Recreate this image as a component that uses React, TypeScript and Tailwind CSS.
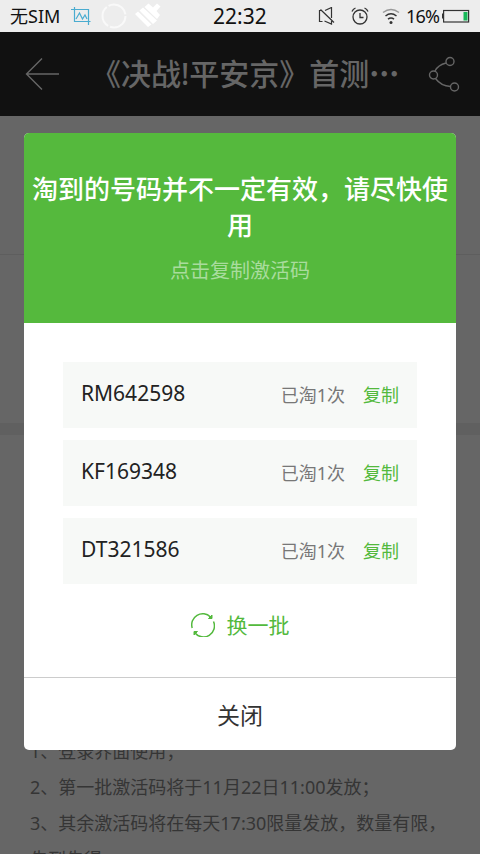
import { useState } from "react";

interface Code {
  code: string;
  count: number;
}

const codes: Code[] = [
  { code: "RM642598", count: 1 },
  { code: "KF169348", count: 1 },
  { code: "DT321586", count: 1 },
];

const StatusBar = () => {
  return (
    <div className="flex h-8 shrink-0 items-center bg-[#ededed] text-[#111]">
      <div className="flex w-[213px] items-center pl-[10px]">
        <span className="w-[61px] whitespace-nowrap text-[18px] leading-8">
          无SIM
        </span>
        <svg className="h-5 w-5" viewBox="0 0 20 20" fill="none" stroke="#4aacd0" strokeWidth="1.2">
          <path d="M0 3.500h17.500v15.500M3.500 1v14.500h16M5 13l3.500-6 3 6 2.500-4 2 4" />
        </svg>
        <svg className="ml-[9px] h-7 w-7" viewBox="0 0 28 28" fill="none" stroke="#f9f9f9" strokeWidth="2">
          <circle cx="14" cy="14" r="11.500" strokeDasharray="22 2.080" />
        </svg>
        <svg className="ml-[5px] h-7 w-7" viewBox="0 0 28 28" fill="#fff">
          <path d="M2 12l3-2.500 13.500 13L15 25zM6.500 8.500L10 5.500 24 18.500l-4 3.500z" />
          <path d="M11.500 5l4-3.500 4.500 4L24 1.500l3.500 3-4 4.500 3.500 4-3 4z" />
        </svg>
      </div>
      <span className="w-[54px] text-[21px] leading-8">22:32</span>
      <div className="flex flex-1 items-center pl-[51px]">
        <svg className="h-[18px] w-[17px]" viewBox="0 0 17 18" fill="none" stroke="#333" strokeWidth="1.2">
          <path d="M4 3.500H1.500v11H4.500M7 3.500l6.500-3V11M6.500 14l7 3v-3M2.500 2.500L16 15.500" />
        </svg>
        <svg className="ml-4 h-[18px] w-[18px]" viewBox="0 0 18 18" fill="none" stroke="#333" strokeWidth="1.3">
          <circle cx="9" cy="10" r="7" />
          <path d="M9 6v4.500h3.500M1 4.500Q2 2 4.500 1M17 4.500Q16 2 13.500 1" />
        </svg>
        <svg className="ml-[13px] h-[17px] w-[18px]" viewBox="0 0 18 17" fill="none" stroke="#333" strokeWidth="1.5">
          <path d="M1 4.500q8-6 16 0" stroke="#999" />
          <path d="M3.500 8q5.500-4.500 11 0M6 11.200q3-2.500 6 0" />
          <circle cx="9" cy="14.500" r="1.500" fill="#333" stroke="none" />
        </svg>
        <span className="ml-[6px] w-[36px] whitespace-nowrap text-[18px] leading-8 tracking-[-0.8px]">
          16%
        </span>
        <svg className="h-[14px] w-7" viewBox="0 0 28 14" fill="none">
          <path d="M.5 4.500v5" stroke="#333" />
          <rect x="1.600" y="1.500" width="25" height="11.500" stroke="#333" strokeWidth="1.200" />
          <rect x="21.500" y="3" width="4" height="8.500" fill="#17b858" />
        </svg>
      </div>
    </div>
  );
};

const Header = () => {
  return (
    <div className="flex h-[84px] shrink-0 items-center bg-[#111] text-[#666]">
      <svg className="ml-[25px] h-8 w-[35px]" viewBox="0 0 35 32" fill="none" stroke="currentColor" strokeWidth="1.4">
        <path d="M17 .5L1.500 16 17 31.500M1.500 16H34" />
      </svg>
      <h1 className="ml-[31px] w-[337px] pb-0.5 whitespace-nowrap text-[30px] leading-[42px] font-medium">
        《决战!平安京》首测
        <span className="font-['Noto_Sans_CJK_SC',sans-serif] font-black">…</span>
      </h1>
      <svg className="h-9 w-8" viewBox="0 0 32 36" fill="none" stroke="currentColor" strokeWidth="1.400">
        <circle cx="22" cy="5.500" r="4" />
        <circle cx="5.500" cy="19" r="4" />
        <circle cx="26.500" cy="31" r="4" />
        <path d="M18 7Q10 9 7 15M7.500 22.500Q13 30 22.500 30.500" />
      </svg>
    </div>
  );
};

const Page = () => {
  return (
    <div className="flex flex-1 flex-col bg-[#666]">
      <div className="h-[138px] shrink-0" />
      <div className="h-px shrink-0 bg-[#5e5e5e]" />
      <div className="h-[168px] shrink-0" />
      <div className="h-3 shrink-0 bg-[#606060]" />
      <div className="h-[298px] shrink-0" />
      <div className="px-[30px] text-[18px] leading-9 whitespace-nowrap text-[#353535]">
        <p>1、登录界面使用；</p>
        <p>2、第一批激活码将于11月22日11:00发放；</p>
        <p>3、其余激活码将在每天17:30限量发放，数量有限，</p>
        <p>先到先得。</p>
      </div>
    </div>
  );
};

const CodeRow = ({ code, count }: Code) => {
  return (
    <li className="flex h-[66px] items-center bg-[#f7f9f7] px-[18px]">
      <span className="flex-1 pb-0.5 text-[21px] text-[#222]">{code}</span>
      <span className="text-[18px] text-[#777]">已淘{count}次</span>
      <button className="ml-[18px] text-[18px] text-[#53b93d]">复制</button>
    </li>
  );
};

const CodeDialog = ({ onClose }: { onClose: () => void }) => {
  return (
    <div className="absolute top-[133px] left-6 flex h-[617px] w-[432px] flex-col overflow-hidden rounded-[5px] bg-white">
      <div className="h-[190px] bg-[#55b93d] pt-[38px] text-center">
        <h2 className="text-[26px] leading-9 font-medium text-white">
          淘到的号码并不一定有效，请尽快使用
        </h2>
        <p className="mt-[14px] text-[20px] leading-7 text-[#a9dc9e]">
          点击复制激活码
        </p>
      </div>
      <ul className="flex flex-col gap-3 px-[39px] pt-[39px]">
        {codes.map((item) => (
          <CodeRow key={item.code} {...item} />
        ))}
      </ul>
      <button className="mt-[25px] flex h-8 items-center justify-center gap-3 text-[21px] leading-8 text-[#53b93d]">
        <svg className="h-6 w-6" viewBox="0 0 24 24" fill="none" stroke="currentColor" strokeWidth="1.500">
          <path d="M1.200 15A11 11 0 0 1 19.500 4M22.500 8.500A11 11 0 0 1 4 20" />
          <path d="M21 2v3.500h-3.500zM3 22v-3.500h3.500z" fill="currentColor" strokeWidth="1" />
        </svg>
        换一批
      </button>
      <button
        className="mt-auto h-[73px] border-t border-[#ccc] pt-0.5 text-[23px] text-[#333]"
        onClick={onClose}
      >
        关闭
      </button>
    </div>
  );
};

const App = () => {
  const [open, setOpen] = useState(true);
  return (
    <div
      lang="zh-CN"
      className="relative flex h-[854px] w-[480px] flex-col overflow-hidden font-['Noto_Sans','Noto_Sans_CJK_SC',sans-serif]"
    >
      <StatusBar />
      <Header />
      <Page />
      {open && <CodeDialog onClose={() => setOpen(false)} />}
    </div>
  );
};

export default App;
